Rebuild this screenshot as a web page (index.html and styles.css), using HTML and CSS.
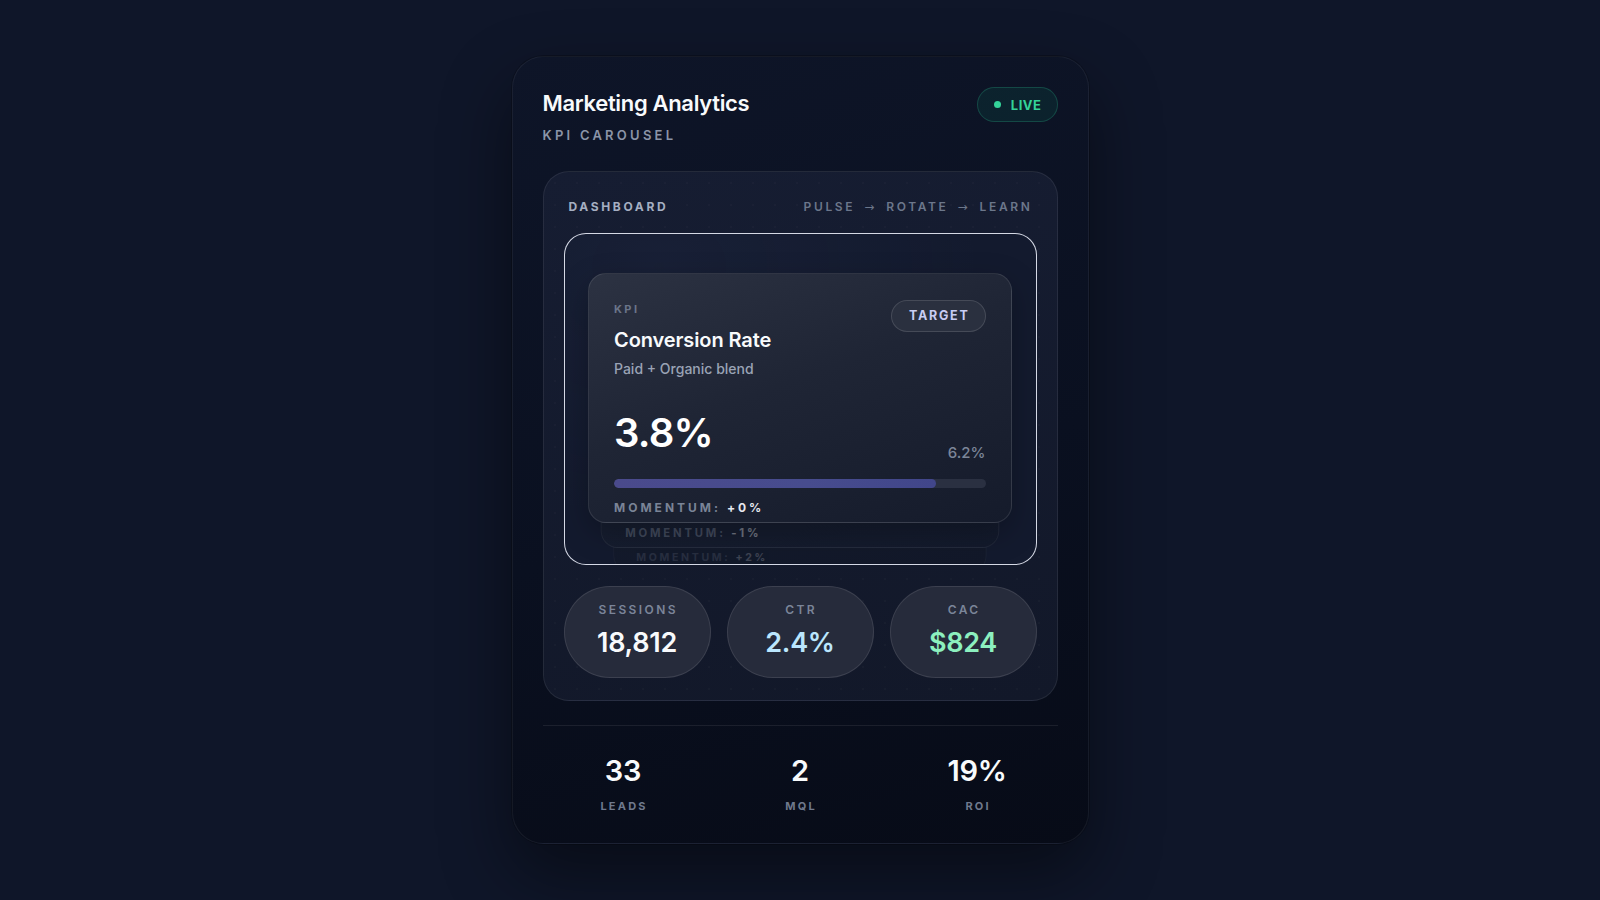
FILE: index.html
```html
<!DOCTYPE html>
<html lang="en">
<head>
<meta charset="utf-8">
<title>Marketing Analytics</title>
<link rel="stylesheet" href="styles.css">
</head>
<body>
<main class="card">
  <header class="card-head">
    <div class="titles">
      <h1 class="title">Marketing Analytics</h1>
      <div class="subtitle">KPI CAROUSEL</div>
    </div>
    <div class="live"><span class="live-dot"></span>LIVE</div>
  </header>

  <section class="panel">
    <div class="panel-head">
      <span class="panel-title">DASHBOARD</span>
      <span class="panel-flow">PULSE<span class="arrow">→</span>ROTATE<span class="arrow">→</span>LEARN</span>
    </div>

    <div class="stage">
      <div class="deck">
        <article class="kpi kpi-back kpi-back-2">
          <div class="kpi-top">
            <div class="kpi-info">
              <div class="kpi-label">KPI</div>
              <div class="kpi-name">Lead Velocity</div>
              <div class="kpi-desc">Weekly pipeline growth</div>
            </div>
            <div class="target">TARGET</div>
          </div>
          <div class="kpi-values">
            <div class="kpi-value">12%</div>
            <div class="kpi-goal">15%</div>
          </div>
          <div class="bar"><div class="bar-fill" style="width: 80%"></div></div>
          <div class="momentum">MOMENTUM: <b>-1%</b></div>
        </article>
        <article class="kpi kpi-back kpi-back-3">
          <div class="kpi-top">
            <div class="kpi-info">
              <div class="kpi-label">KPI</div>
              <div class="kpi-name">Retention</div>
              <div class="kpi-desc">30-day cohort</div>
            </div>
            <div class="target">TARGET</div>
          </div>
          <div class="kpi-values">
            <div class="kpi-value">64%</div>
            <div class="kpi-goal">70%</div>
          </div>
          <div class="bar"><div class="bar-fill" style="width: 90%"></div></div>
          <div class="momentum">MOMENTUM: <b>+2%</b></div>
        </article>
        <article class="kpi kpi-front">
          <div class="kpi-top">
            <div class="kpi-info">
              <div class="kpi-label">KPI</div>
              <div class="kpi-name">Conversion Rate</div>
              <div class="kpi-desc">Paid + Organic blend</div>
            </div>
            <div class="target">TARGET</div>
          </div>
          <div class="kpi-values">
            <div class="kpi-value">3.8%</div>
            <div class="kpi-goal">6.2%</div>
          </div>
          <div class="bar"><div class="bar-fill" style="width: 86.8%"></div></div>
          <div class="momentum">MOMENTUM: <b>+0%</b></div>
        </article>
      </div>
    </div>

    <div class="pills">
      <div class="pill">
        <div class="pill-label">SESSIONS</div>
        <div class="pill-value">18,812</div>
      </div>
      <div class="pill">
        <div class="pill-label">CTR</div>
        <div class="pill-value tone-blue">2.4%</div>
      </div>
      <div class="pill">
        <div class="pill-label">CAC</div>
        <div class="pill-value tone-green">$824</div>
      </div>
    </div>
  </section>

  <footer class="stats">
    <div class="stat">
      <div class="stat-value">33</div>
      <div class="stat-label">LEADS</div>
    </div>
    <div class="stat">
      <div class="stat-value tone-lavender">2</div>
      <div class="stat-label">MQL</div>
    </div>
    <div class="stat">
      <div class="stat-value tone-mint">19%</div>
      <div class="stat-label">ROI</div>
    </div>
  </footer>
</main>
</body>
</html>
```

FILE: styles.css
```css
* { box-sizing: border-box; }

html, body {
  margin: 0;
  height: 100%;
}

body {
  background: #0f1629;
  font-family: "Inter", "Noto Sans", "Liberation Sans", sans-serif;
  color: #f1f5f9;
  display: flex;
  align-items: center;
  justify-content: center;
}

.card {
  width: 577px;
  height: 788px;
  border-radius: 32px;
  padding: 32px 30px 30px;
  background: linear-gradient(165deg, #0e1528 0%, #0a1020 55%, #070b17 100%);
  border: 1px solid rgba(255, 255, 255, 0.06);
  box-shadow: 0 30px 70px rgba(0, 0, 0, 0.45), 0 0 0 1px rgba(0, 0, 0, 0.2);
  display: flex;
  flex-direction: column;
}

/* header */
.card-head {
  display: flex;
  justify-content: space-between;
  align-items: flex-start;
}

.title {
  margin: 0;
  font-size: 22px;
  line-height: 28px;
  font-weight: 600;
  letter-spacing: -0.015em;
  color: #f8fafc;
}

.subtitle {
  margin-top: 9px;
  font-size: 13px;
  line-height: 18px;
  font-weight: 600;
  letter-spacing: 0.25em;
  color: #8b95a8;
}

.live {
  margin-top: -2px;
  height: 35px;
  padding: 0 15px 0 16px;
  border-radius: 18px;
  display: flex;
  align-items: center;
  gap: 10px;
  background: rgba(16, 185, 129, 0.09);
  border: 1px solid rgba(52, 211, 153, 0.22);
  color: #34d399;
  font-size: 13px;
  font-weight: 700;
  letter-spacing: 0.04em;
}

.live-dot {
  width: 7px;
  height: 7px;
  border-radius: 50%;
  background: #34d399;
}

/* panel */
.panel {
  margin-top: 27px;
  height: 530px;
  border-radius: 26px;
  padding: 27px 20px 22px;
  background-color: #131a2d;
  background-image:
    radial-gradient(rgba(255, 255, 255, 0.018) 1px, transparent 1.2px),
    linear-gradient(170deg, #161d32 0%, #121829 100%);
  background-size: 22px 22px, 100% 100%;
  border: 1px solid rgba(255, 255, 255, 0.08);
  display: flex;
  flex-direction: column;
}

.panel-head {
  display: flex;
  justify-content: space-between;
  padding: 0 4px 0 5px;
  height: 16px;
  line-height: 16px;
  font-size: 12px;
  letter-spacing: 0.22em;
}

.panel-title {
  font-weight: 700;
  color: #a5afc2;
}

.panel-flow {
  font-weight: 600;
  color: #6c778b;
}

.arrow {
  font-family: "DejaVu Sans", sans-serif;
  font-weight: 400;
  letter-spacing: 0;
  margin: 0 12px 0 9px;
}

.stage {
  margin-top: 18px;
  height: 334px;
  border-radius: 22px;
  border: 1.5px solid rgba(240, 244, 255, 0.88);
  background:
    radial-gradient(ellipse at 20% 10%, rgba(60, 72, 110, 0.12), transparent 60%),
    #131a2e;
  overflow: hidden;
  padding: 38.5px 24px 0 23.5px;
}

.deck {
  position: relative;
}

.kpi {
  border-radius: 18px;
  padding: 28px 25px 6.5px;
  display: flex;
  flex-direction: column;
}

.kpi-front {
  position: relative;
  z-index: 3;
  background: linear-gradient(160deg, #2c3242 0%, #1f2535 45%, #151b2b 100%);
  border: 1px solid rgba(255, 255, 255, 0.1);
  box-shadow: 0 10px 30px rgba(0, 0, 0, 0.25);
}

.kpi-back {
  position: absolute;
  left: 0;
  right: 0;
  top: 0;
  transform-origin: 50% 100%;
  background: linear-gradient(160deg, #1a2133 0%, #131a2c 100%);
  border: 1px solid rgba(255, 255, 255, 0.06);
}

/* covered by the front card: keep layout, don't paint */
.kpi-back .kpi-top,
.kpi-back .kpi-values,
.kpi-back .bar {
  visibility: hidden;
}

.kpi-back-2 {
  z-index: 2;
  transform: translateY(24px) scale(0.94);
}

.kpi-back-2 .momentum { opacity: 0.42; }

.kpi-back-3 {
  z-index: 1;
  transform: translateY(48px) scale(0.88);
  background: linear-gradient(160deg, #151c2e 0%, #121829 100%);
  border-color: rgba(255, 255, 255, 0.04);
}

.kpi-back-3 .momentum { opacity: 0.2; }

.kpi-top {
  display: flex;
  justify-content: space-between;
  align-items: flex-start;
}

.kpi-label {
  font-size: 11px;
  line-height: 14px;
  font-weight: 700;
  letter-spacing: 0.22em;
  color: #6b7589;
}

.kpi-name {
  margin-top: 11px;
  font-size: 20px;
  line-height: 26px;
  font-weight: 600;
  letter-spacing: -0.005em;
  color: #f8fafc;
}

.kpi-desc {
  margin-top: 6.5px;
  font-size: 14px;
  line-height: 20px;
  font-weight: 500;
  color: #9aa3b5;
}

.target {
  margin-top: -2px;
  height: 32px;
  padding: 0 15px 0 17px;
  border-radius: 16px;
  display: flex;
  align-items: center;
  background: #2a303f;
  border: 1px solid rgba(255, 255, 255, 0.13);
  color: #c8cdf4;
  font-size: 12.5px;
  font-weight: 700;
  letter-spacing: 0.14em;
}

.kpi-values {
  margin-top: 34px;
  display: flex;
  justify-content: space-between;
  align-items: flex-start;
}

.kpi-value {
  font-size: 40px;
  line-height: 40px;
  font-weight: 600;
  letter-spacing: -0.02em;
  color: #ffffff;
}

.kpi-goal {
  margin-top: 29.5px;
  font-size: 15px;
  line-height: 20px;
  font-weight: 500;
  color: #7c8699;
}

.bar {
  margin-top: 16.5px;
  height: 9px;
  border-radius: 5px;
  background: #2a3041;
  overflow: hidden;
}

.bar-fill {
  height: 100%;
  border-radius: 5px;
  background: linear-gradient(90deg, #4a4a8c 0%, #474c8e 60%, #41468a 100%);
}

.momentum {
  margin-top: 11.5px;
  font-size: 12px;
  line-height: 16px;
  font-weight: 700;
  letter-spacing: 0.25em;
  color: #7a8497;
}

.momentum b {
  color: #e6e8ef;
  font-weight: 700;
}

/* pills */
.pills {
  margin-top: 21px;
  display: grid;
  grid-template-columns: repeat(3, 1fr);
  gap: 16px;
}

.pill {
  height: 92px;
  border-radius: 46px;
  background: #262b3b;
  border: 1px solid rgba(255, 255, 255, 0.1);
  display: flex;
  flex-direction: column;
  align-items: center;
  padding-top: 15px;
}

.pill-label {
  font-size: 12px;
  line-height: 16px;
  font-weight: 600;
  letter-spacing: 0.2em;
  margin-right: -0.2em;
  color: #7b8599;
}

.pill-value {
  margin-top: 9px;
  font-size: 27px;
  line-height: 32px;
  font-weight: 600;
  letter-spacing: -0.01em;
  color: #f8fafc;
}

.tone-blue { color: #bae6fd; }
.tone-green { color: #8cf0bf; }
.tone-lavender { color: #c2c8f7; }
.tone-mint { color: #8ef0be; }

/* footer stats */
.stats {
  margin-top: 24px;
  border-top: 1px solid rgba(255, 255, 255, 0.08);
  padding-top: 28px;
  display: grid;
  grid-template-columns: repeat(3, 1fr);
  gap: 16px;
}

.stat {
  display: flex;
  flex-direction: column;
  align-items: center;
}

.stat-value {
  font-size: 29px;
  line-height: 34px;
  font-weight: 600;
  letter-spacing: -0.01em;
  color: #f8fafc;
}

.stat-label {
  margin-top: 11px;
  font-size: 11px;
  line-height: 14px;
  font-weight: 700;
  letter-spacing: 0.2em;
  margin-right: -0.2em;
  color: #6f798d;
}
```
